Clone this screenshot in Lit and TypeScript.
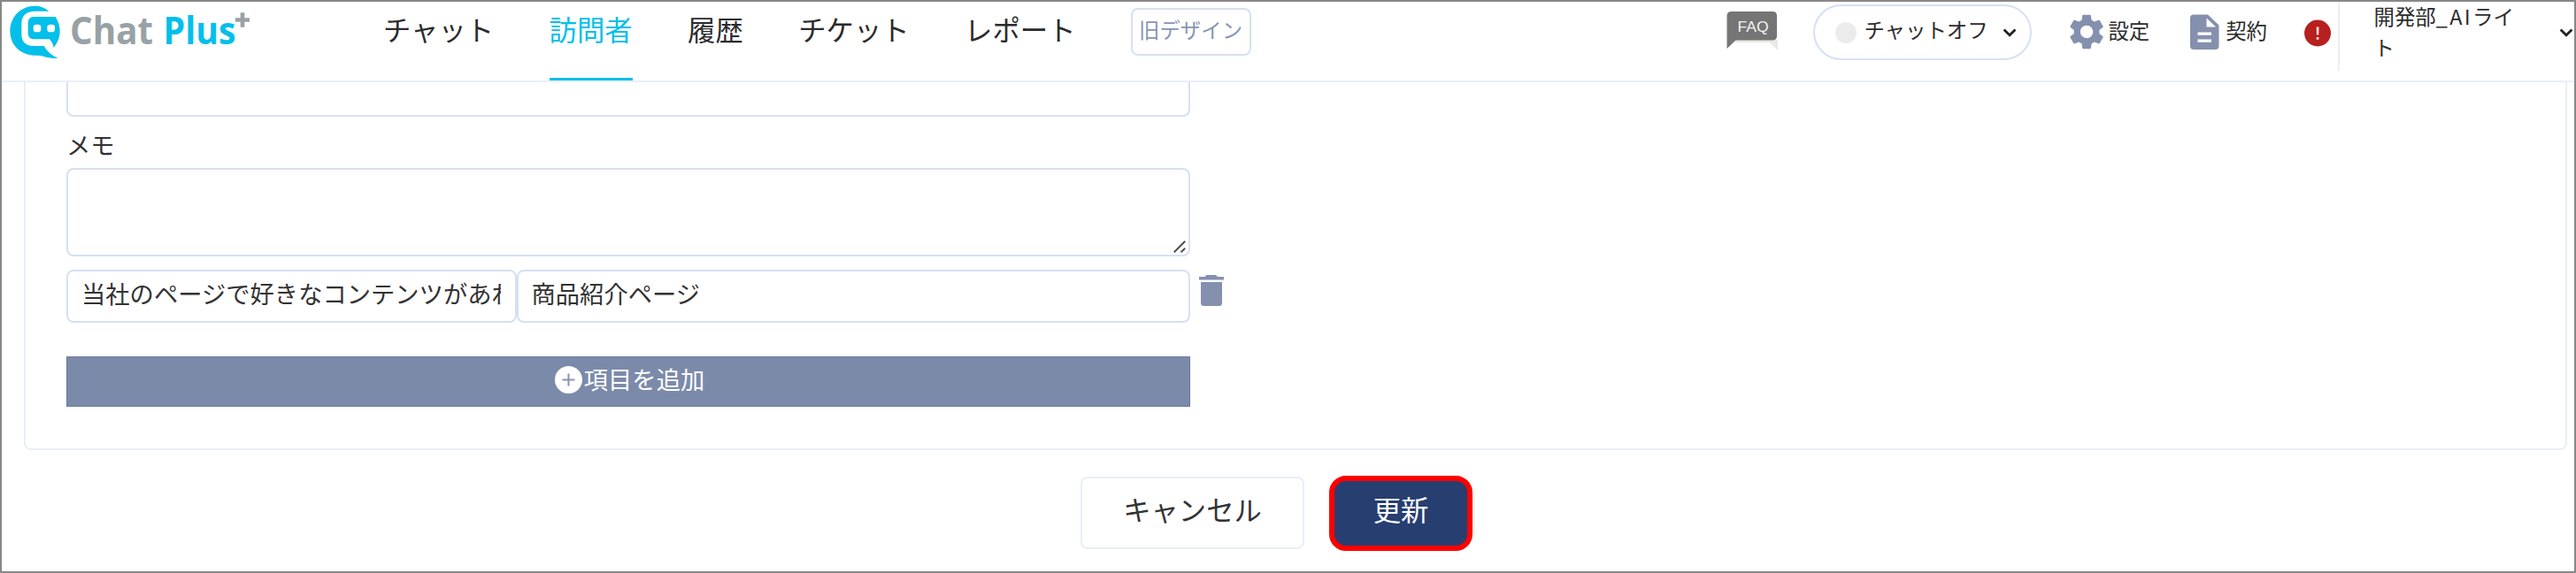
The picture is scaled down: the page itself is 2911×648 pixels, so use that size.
import { LitElement, html, css } from "lit";
import { customElement, property } from "lit/decorators.js";
import { classMap } from "lit/directives/class-map.js";

const chevron = html`<svg width="16" height="12" viewBox="0 0 16 12" fill="none" stroke="#222" stroke-width="2.8"><path d="M1.6 2.6 L8 8.8 L14.4 2.6" /></svg>`;

@customElement("brand-logo")
class BrandLogo extends LitElement {
  static styles = css`
    :host { display: block; width: 282px; height: 66px; }
    svg { display: block; }
    text { font-family: "Open Sans", "Noto Sans", sans-serif; font-weight: 700; font-size: 42.5px; }
    .gray { fill: #98a1a5; }
    .cyan { fill: #04bfea; }
  `;
  render() {
    return html`<svg width="282" height="66" viewBox="8 2 282 66">
      <g transform="scale(.33333)">
        <path class="cyan" d="M166 38C151 25 136 20 118 20C70 20 34 58 34 106C34 152 70 188 118 188C128 188 136 188 142 190C160 196 178 199 196 198C176 188 160 175 149 156L112 156C88 156 73 142 73 118L73 80C73 52 90 38 118 38Z" />
        <path class="cyan" d="M116 57H188C198 72 203 90 203 106C203 128 195 145 182 162C180 150 175 140 168 133H116C102 133 95 125 95 111V79C95 65 102 57 116 57Z" />
        <rect x="113" y="83" width="26" height="26" rx="10" fill="#fff" />
        <rect x="160" y="83" width="26" height="26" rx="10" fill="#fff" />
      </g>
      <text class="gray" x="79" y="50.3" textLength="94" lengthAdjust="spacingAndGlyphs">Chat</text>
      <text class="cyan" x="184.5" y="50.3" textLength="82" lengthAdjust="spacingAndGlyphs">Plus</text>
      <path class="gray" d="M271.7 14.3h4.600v5.900h5.700v4.600h-5.700v5.900h-4.600v-5.900h-5.700v-4.600h5.700z" />
    </svg>`;
  }
}

@customElement("site-header")
class SiteHeader extends LitElement {
  @property() active = "訪問者";
  private tabs = ["チャット", "訪問者", "履歴", "チケット", "レポート"];

  static styles = css`
    :host {
      display: flex; align-items: flex-start; box-sizing: border-box; height: 91px;
      border-bottom: 2px solid #e9eff7; color: #2b2b2b; background: #fff; white-space: nowrap;
    }
    svg { display: block; flex: none; }
    .logo { margin-left: 6px; }
    .nav { display: flex; gap: 62.3px; margin-left: 143px; height: 89px; }
    .tab { box-sizing: border-box; height: 89px; font-size: 31.4px; line-height: 62px; border-bottom: 3.5px solid transparent; }
    .on { color: #04bfea; border-bottom-color: #04bfea; }
    .old {
      box-sizing: border-box; width: 136px; height: 54px; margin: 7px 0 0 62px; border: 2px solid #d6e0f2;
      border-radius: 8px; color: #8794b4; font-size: 23.4px; line-height: 44px; text-align: center;
    }
    .right { display: flex; align-items: flex-start; margin-left: auto; font-size: 23.4px; }
    .faq text { font-family: "Liberation Sans", Arial, sans-serif; font-size: 17px; fill: #f2f2f2; }
    .pill {
      display: flex; align-items: center; box-sizing: border-box; width: 247px; height: 63px; margin: 3px 0 0 40px;
      border: 2px solid #d6e0f4; border-radius: 32px; padding-left: 23px;
    }
    .dot { width: 24px; height: 24px; border-radius: 50%; background: #ebebeb; margin-right: 8px; }
    .pilltext { line-height: 34px; margin: -7px 16px 0 0; }
    .link { display: flex; height: 68px; line-height: 64px; }
    .link svg { margin-top: 14px; }
    .set { margin-left: 42px; gap: 4px; }
    .con { margin-left: 46px; gap: 7px; }
    .alert { margin: 20px 7.5px 0 42px; }
    .user { display: flex; align-items: center; box-sizing: border-box; height: 78px; border-left: 2px solid #e9eff7; padding-left: 39px; }
    .name { width: 165px; line-height: 35px; white-space: normal; word-break: break-all; align-self: flex-start; margin-top: -1px; }
    .latin { letter-spacing: 2.4px; }
    .user svg { margin: -8px 1px 0 44.5px; }
  `;

  render() {
    return html`
      <brand-logo class="logo"></brand-logo>
      <nav class="nav">
        ${this.tabs.map((t) => html`<a class=${classMap({ tab: true, on: t === this.active })}>${t}</a>`)}
      </nav>
      <div class="old">旧デザイン</div>
      <div class="right">
        <svg class="faq" width="58" height="58" viewBox="1952 2 58 58">
          <path d="M1998 45h12v12z M1962 45h48v3h-48z" fill="#e9e8e2" />
          <path d="M1957.5 13h46.500q5 0 5 5v22.500q0 5-5 5h-41.500l-10 9.500v-37q0-5 5-5z" fill="#757575" />
          <text x="1964.500" y="36.300" textLength="35" lengthAdjust="spacingAndGlyphs">FAQ</text>
        </svg>
        <div class="pill"><span class="dot"></span><span class="pilltext">チャットオフ</span>${chevron}</div>
        <div class="link set">
          <svg width="40" height="40" viewBox="2.200 2 19.600 20"><path fill="#8490ae" d="M19.140 12.940c.040-.300.060-.610.060-.940s-.020-.640-.070-.940l2.030-1.580a.49.49 0 0 0 .120-.610l-1.920-3.320a.488.488 0 0 0-.590-.220l-2.390.960c-.500-.380-1.030-.700-1.620-.940L14.400 2.810a.484.484 0 0 0-.480-.410h-3.840c-.240 0-.430.170-.470.410l-.360 2.540c-.590.240-1.130.570-1.620.940l-2.390-.960c-.220-.080-.470 0-.590.220L2.740 8.870c-.120.210-.080.470.120.610l2.030 1.580c-.050.300-.090.630-.090.940s.020.640.070.940l-2.030 1.580a.49.49 0 0 0-.120.610l1.920 3.320c.120.220.370.290.590.220l2.390-.960c.500.380 1.030.700 1.620.940l.360 2.540c.050.240.240.410.480.410h3.840c.240 0 .440-.170.470-.410l.360-2.540c.590-.240 1.130-.560 1.620-.940l2.390.960c.220.080.470 0 .590-.220l1.920-3.320a.49.49 0 0 0-.120-.610zM12 15.600A3.610 3.610 0 0 1 8.400 12c0-1.980 1.620-3.600 3.600-3.600s3.600 1.620 3.600 3.600-1.620 3.600-3.600 3.600z" /></svg>
          <span>設定</span>
        </div>
        <div class="link con">
          <svg width="33" height="40" viewBox="0 0 33 40">
            <path fill="#8490ae" d="M4 .5h16l12.500 12v23.500q0 4-4 4h-24.500q-4 0-4-4v-31.500q0-4 4-4z" />
            <path fill="#fff" d="M18.500 4.500v10h10.500zM8.500 20.500h15.500v3.300h-15.500zM8.500 28.500h15.500v3.300h-15.500z" />
          </svg>
          <span>契約</span>
        </div>
        <svg class="alert" width="30" height="31" viewBox="0 0 30 31">
          <ellipse cx="15" cy="15.500" rx="15" ry="15" fill="#b6201f" />
          <path d="M13.600 8.500h2.900l-.3 9h-2.300zM13.700 20h2.700v2.700h-2.700z" fill="#f7dede" />
        </svg>
        <div class="user"><span class="name">開発部<span class="latin">_AI</span>ライト</span>${chevron}</div>
      </div>
    `;
  }
}

@customElement("visitor-form")
class VisitorForm extends LitElement {
  static styles = css`
    :host {
      display: block; box-sizing: border-box; margin: 0 8px 0 25px; height: 416px; padding-left: 46px;
      border: 2px solid #e9eef8; border-top: 0; border-radius: 0 0 8px 8px; color: #333; font-size: 27.3px;
    }
    svg { display: block; flex: none; }
    .box { box-sizing: border-box; border: 2px solid #d6e0f2; border-radius: 8px; background: #fff; width: 1270px; }
    .prev { height: 39px; border-top: 0; border-radius: 0 0 8px 8px; }
    .label { height: 58px; line-height: 63px; }
    .memo { display: flex; height: 100px; justify-content: flex-end; align-items: flex-end; padding: 0 3px 2px 0; }
    .row { display: flex; align-items: flex-start; margin-top: 15px; }
    .field { height: 60px; padding: 0 16px 0 15px; line-height: 48px; white-space: nowrap; }
    .clip { overflow: hidden; }
    .key { width: 508.5px; }
    .val { width: 761.5px; }
    .trash { margin: 6px 0 0 10px; }
    .add {
      display: flex; justify-content: center; align-items: center; gap: 2px; box-sizing: border-box; width: 1270px; height: 57px;
      margin-top: 38px; padding: 0 0 4px 3px; background: #7c8aaa; border: 1px solid #6b7a9f; color: #fff;
    }
    .addtext { line-height: 40px; margin-top: -4px; }
  `;
  render() {
    return html`
      <div class="box prev"></div>
      <div class="label">メモ</div>
      <div class="box memo">
        <svg width="14" height="14" viewBox="0 0 14 14" stroke="#505050" stroke-width="2"><path d="M.8 13.200 13.200.8M8.500 13.200 13.200 8.800" /></svg>
      </div>
      <div class="row">
        <div class="box field key"><div class="clip">当社のページで好きなコンテンツがあれば</div></div>
        <div class="box field val"><div class="clip">商品紹介ページ</div></div>
        <svg class="trash" width="28" height="35" viewBox="0 0 28 35" fill="#8490ae">
          <path d="M8.500 0h10.500l2 2h7v3.500h-28v-3.500h6.500z" /><path d="M2 8h24v23.500q0 3.500-3.500 3.500h-17q-3.500 0-3.500-3.500z" />
        </svg>
      </div>
      <div class="add">
        <svg width="31" height="31" viewBox="0 0 31 31"><circle cx="15.500" cy="15.500" r="15.500" fill="#fff" /><path d="M15.500 8.500v14M8.500 15.500h14" stroke="#8794b4" stroke-width="2" /></svg>
        <span class="addtext">項目を追加</span>
      </div>
    `;
  }
}

@customElement("app-root")
class AppRoot extends LitElement {
  static styles = css`
    :host {
      display: block; box-sizing: border-box; width: 2911px; height: 648px; overflow: hidden; border: 2px solid #888;
      background: #fff; font-family: "Noto Sans CJK JP", sans-serif; font-weight: 400;
    }
    .actions { display: flex; gap: 28px; margin: 29px 0 0 1219px; font-size: 31.3px; text-align: center; }
    .btn { box-sizing: border-box; }
    .cancel { width: 253px; height: 82px; margin-top: 1px; border: 2px solid #e9eef8; border-radius: 8px; color: #333; line-height: 70px; }
    .update { width: 162px; height: 85px; border: 6px solid #fe0000; border-radius: 19px; background: #273e70; color: #fff; line-height: 64px; }
  `;
  render() {
    return html`
      <site-header></site-header>
      <visitor-form></visitor-form>
      <div class="actions">
        <div class="btn cancel">キャンセル</div>
        <div class="btn update">更新</div>
      </div>
    `;
  }
}
